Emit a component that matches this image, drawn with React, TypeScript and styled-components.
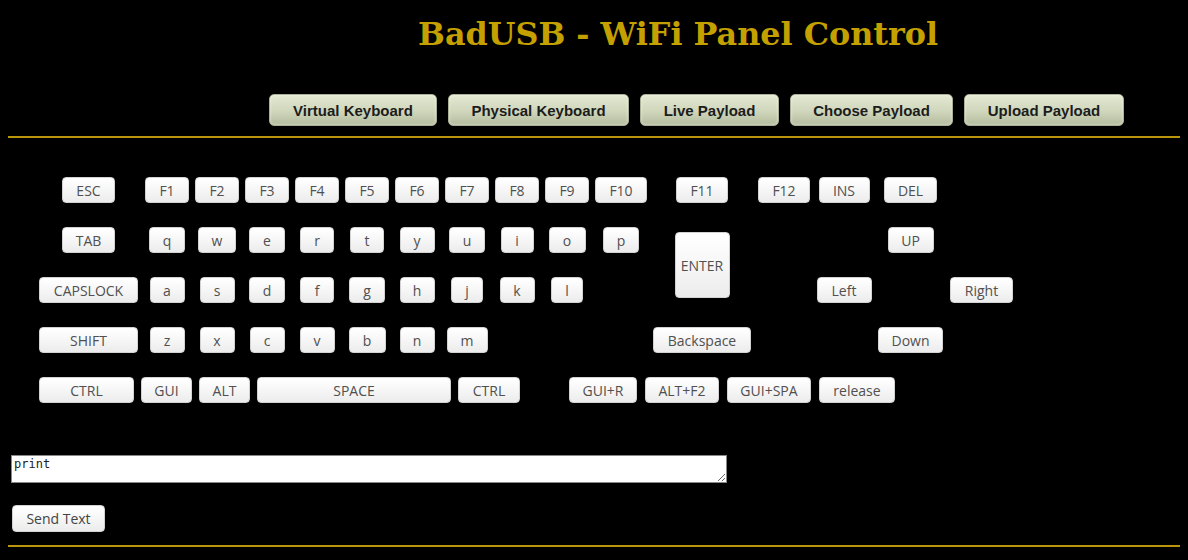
import React from "react";
import styled, { createGlobalStyle } from "styled-components";

const Global = createGlobalStyle`
  html, body { background: #000; }
  body { margin: 8px; font-family: "Open Sans", "Liberation Sans", sans-serif; overflow: hidden; }
`;

const Page = styled.div`
  display: flex;
  flex-direction: column;
  align-items: flex-start;
`;

const Title = styled.h1`
  margin: 0 0 0 410px;
  font-family: "DejaVu Serif", serif;
  font-weight: bold;
  font-size: 31.8px;
  line-height: 52px;
  color: #c4a000;
  white-space: nowrap;
`;

const Nav = styled.nav`
  display: flex;
  gap: 11px;
  margin: 34px 0 0 261px;
`;

const NavButton = styled.button<{ $w: number }>`
  width: ${(p) => p.$w}px;
  height: 32px;
  padding: 0;
  font-family: "Liberation Sans", Arial, sans-serif;
  font-weight: bold;
  font-size: 15px;
  color: #1c1c1c;
  background: linear-gradient(to bottom, #e4e9d3 0%, #cfd6bb 55%, #b4bc9e 100%);
  border: 1px solid #a9b095;
  border-radius: 5px;
  box-shadow: inset 0 0 3px rgba(255, 255, 255, 0.6), 0 1px 2px rgba(0, 0, 0, 0.4);
  cursor: pointer;
  white-space: nowrap;
`;

const Rule = styled.div<{ $top: number }>`
  width: calc(100% + 8px);
  height: 2px;
  margin-top: ${(p) => p.$top}px;
  background: #b8950a;
`;

const KeyGrid = styled.div`
  display: grid;
  grid-template-columns: 107px repeat(9, 50px) 58px 104px 60px 60px 73px 69px;
  grid-template-rows: repeat(4, 26px);
  row-gap: 24px;
  justify-items: center;
  align-items: center;
  margin: 39px 0 0 27px;
`;

const Key = styled.button<{ $w: number; $h?: number }>`
  width: ${(p) => p.$w}px;
  height: ${(p) => p.$h ?? 26}px;
  padding: 0;
  font-family: "Open Sans", "Liberation Sans", sans-serif;
  font-size: 14px;
  color: #505050;
  background: linear-gradient(to bottom, #ffffff 5%, #ececec 100%);
  border: 1px solid #d2d2d2;
  border-radius: 4px;
  box-shadow: inset 0 1px 0 #fff;
  cursor: pointer;
  white-space: nowrap;
`;

const Cell = styled.div<{ $col: number; $row: number; $span?: number }>`
  grid-column: ${(p) => p.$col};
  grid-row: ${(p) => p.$row} / span ${(p) => p.$span ?? 1};
  display: flex;
  align-items: center;
  justify-content: center;
`;

const ModRow = styled.div`
  display: flex;
  gap: 49px;
  margin: 24px 0 0 31px;
`;

const ModGroup = styled.div<{ $gap: number }>`
  display: flex;
  gap: ${(p) => p.$gap}px;
`;

const TextBox = styled.textarea`
  display: block;
  box-sizing: border-box;
  width: 716px;
  height: 28px;
  margin: 52px 0 0 3px;
  padding: 1px 2px;
  font-family: "DejaVu Sans Mono", "Liberation Mono", monospace;
  font-size: 12px;
  color: #222;
  background: #fff;
  border: 1px solid #888;
`;

const SendButton = styled(Key)`
  margin: 22px 0 0 4px;
  color: #444;
`;

type K = { label: string; col: number; row: number; w: number; h?: number; span?: number };

const keys: K[] = [
  { label: "ESC", col: 1, row: 1, w: 53 },
  ...["F1", "F2", "F3", "F4", "F5", "F6", "F7", "F8", "F9"].map((l, i) => ({ label: l, col: i + 2, row: 1, w: 44 })),
  { label: "F10", col: 11, row: 1, w: 52 },
  { label: "F11", col: 12, row: 1, w: 52 },
  { label: "F12", col: 13, row: 1, w: 52 },
  { label: "INS", col: 14, row: 1, w: 51 },
  { label: "DEL", col: 15, row: 1, w: 53 },

  { label: "TAB", col: 1, row: 2, w: 53 },
  ...([["q", 36], ["w", 38], ["e", 36], ["r", 34], ["t", 34], ["y", 35], ["u", 36], ["i", 33], ["o", 37]] as [string, number][]).map(
    ([l, w], i) => ({ label: l, col: i + 2, row: 2, w })
  ),
  { label: "p", col: 11, row: 2, w: 36 },
  { label: "ENTER", col: 12, row: 2, w: 55, h: 66, span: 2 },
  { label: "UP", col: 15, row: 2, w: 46 },

  { label: "CAPSLOCK", col: 1, row: 3, w: 99 },
  ...([["a", 35], ["s", 35], ["d", 36], ["f", 34], ["g", 36], ["h", 35], ["j", 32], ["k", 35], ["l", 32]] as [string, number][]).map(
    ([l, w], i) => ({ label: l, col: i + 2, row: 3, w })
  ),
  { label: "Left", col: 14, row: 3, w: 55 },
  { label: "Right", col: 16, row: 3, w: 63 },

  { label: "SHIFT", col: 1, row: 4, w: 99 },
  ...([["z", 35], ["x", 35], ["c", 35], ["v", 35], ["b", 37], ["n", 35], ["m", 41]] as [string, number][]).map(
    ([l, w], i) => ({ label: l, col: i + 2, row: 4, w })
  ),
  { label: "Backspace", col: 12, row: 4, w: 98 },
  { label: "Down", col: 15, row: 4, w: 65 },
];

const modsLeft: [string, number][] = [["CTRL", 95], ["GUI", 51], ["ALT", 51], ["SPACE", 194], ["CTRL", 62]];
const modsRight: [string, number][] = [["GUI+R", 68], ["ALT+F2", 74], ["GUI+SPA", 84], ["release", 76]];

const navItems: [string, number][] = [
  ["Virtual Keyboard", 168],
  ["Physical Keyboard", 181],
  ["Live Payload", 139],
  ["Choose Payload", 163],
  ["Upload Payload", 160],
];

export default function App() {
  return (
    <>
      <Global />
      <Page>
        <Title>BadUSB - WiFi Panel Control</Title>
        <Nav>
          {navItems.map(([n, w]) => (
            <NavButton key={n} $w={w}>{n}</NavButton>
          ))}
        </Nav>
        <Rule $top={10} />
        <KeyGrid>
          {keys.map((k) => (
            <Cell key={k.label + k.row} $col={k.col} $row={k.row} $span={k.span}>
              <Key $w={k.w} $h={k.h}>{k.label}</Key>
            </Cell>
          ))}
        </KeyGrid>
        <ModRow>
          <ModGroup $gap={7}>
            {modsLeft.map(([l, w], i) => (
              <Key key={l + i} $w={w}>{l}</Key>
            ))}
          </ModGroup>
          <ModGroup $gap={8}>
            {modsRight.map(([l, w]) => (
              <Key key={l} $w={w}>{l}</Key>
            ))}
          </ModGroup>
        </ModRow>
        <TextBox defaultValue="print" />
        <SendButton $w={93} $h={27}>Send Text</SendButton>
        <Rule $top={13} />
      </Page>
    </>
  );
}
